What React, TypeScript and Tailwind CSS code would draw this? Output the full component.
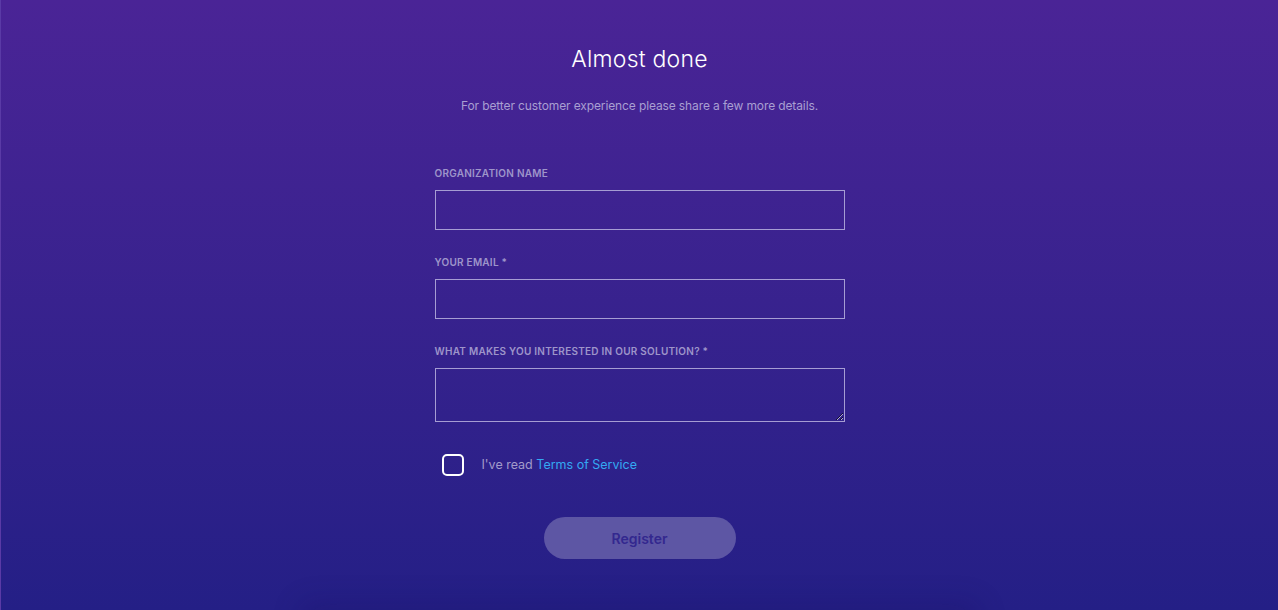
const labelCls = "block text-[10px] font-semibold uppercase tracking-[0.025em] text-[#9e95ca] mb-[9px]";
const inputCls = "block w-full border border-[#a69dd3] bg-transparent px-3 text-[13px] text-white outline-none";

export default function App() {
  return (
    <div
      className="relative flex min-h-[610px] w-full flex-col items-center overflow-hidden border-l border-[#5a3aa6] bg-gradient-to-b from-[#4a2496] to-[#241f86] text-white"
      style={{ fontFamily: "Inter, 'Noto Sans', sans-serif" }}
    >
      <div className="pointer-events-none absolute bottom-[-30px] left-[300px] right-[300px] h-[30px] shadow-[0_-6px_30px_rgba(20,10,80,0.2)]" />
      <h1 className="mt-[44px] text-[23px] font-light leading-[30px] tracking-[0.01em] text-white">Almost done</h1>
      <p className="mt-[24px] text-[12px] leading-[16px] tracking-[-0.01em] text-[#a99fd2]">
        For better customer experience please share a few more details.
      </p>

      <form className="mt-[52px] w-[410px]">
        <label className={labelCls}>Organization name</label>
        <input type="text" className={inputCls + " h-[40px]"} />

        <label className={labelCls + " mt-[25px]"}>Your email *</label>
        <input type="email" className={inputCls + " h-[40px]"} />

        <label className={labelCls + " mt-[25px]"}>What makes you interested in our solution? *</label>
        <textarea className={inputCls + " h-[54px] resize-y py-2"} />

        <div className="mt-[32px] flex items-center pl-[7px]">
          <span className="h-[22px] w-[22px] rounded-[5px] border-2 border-white" />
          <span className="ml-[18px] text-[12.5px] text-[#a39bca]">
            I've read <a className="text-[#34a8f2]">Terms of Service</a>
          </span>
        </div>

        <div className="mt-[41px] flex justify-center">
          <button
            type="button"
            className="h-[42px] w-[192px] rounded-full bg-[#5d56a4] text-[14px] font-semibold text-[#33288f]"
          >
            Register
          </button>
        </div>
      </form>
    </div>
  );
}
